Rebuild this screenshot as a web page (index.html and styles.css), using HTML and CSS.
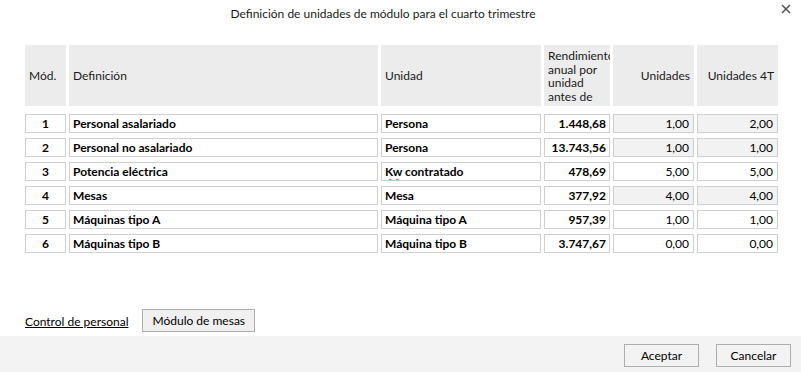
FILE: index.html
```html
<!DOCTYPE html>
<html lang="es">
<head>
<meta charset="UTF-8">
<title>Definición de unidades de módulo</title>
<link rel="stylesheet" href="styles.css">
</head>
<body>

  <!-- Cabecera del dialogo -->
  <div class="titleBar">
    <span class="title">Definición de unidades de módulo para el cuarto trimestre</span>
    <svg class="close" width="10" height="10" viewBox="0 0 10 10">
      <path d="M1 1 L9 9 M9 1 L1 9" stroke="#555" stroke-width="1.6" fill="none"/>
    </svg>
  </div>

  <!-- Tabla de modulos -->
  <div class="content">
    <div class="grid head">
      <div class="hcell">Mód.</div>
      <div class="hcell">Definición</div>
      <div class="hcell">Unidad</div>
      <div class="hcell wrap">Rendimiento anual por unidad antes de</div>
      <div class="hcell right">Unidades</div>
      <div class="hcell right">Unidades 4T</div>
    </div>

    <div class="rows">
      <div class="grid row">
        <div class="cell center">1</div>
        <div class="cell">Personal asalariado</div>
        <div class="cell">Persona</div>
        <div class="cell right">1.448,68</div>
        <div class="cell num ro">1,00</div>
        <div class="cell num ro">2,00</div>
      </div>
      <div class="grid row">
        <div class="cell center">2</div>
        <div class="cell">Personal no asalariado</div>
        <div class="cell">Persona</div>
        <div class="cell right">13.743,56</div>
        <div class="cell num ro">1,00</div>
        <div class="cell num ro">1,00</div>
      </div>
      <div class="grid row">
        <div class="cell center">3</div>
        <div class="cell">Potencia eléctrica</div>
        <div class="cell"><span class="spell">Kw</span> contratado</div>
        <div class="cell right">478,69</div>
        <div class="cell num">5,00</div>
        <div class="cell num">5,00</div>
      </div>
      <div class="grid row">
        <div class="cell center">4</div>
        <div class="cell">Mesas</div>
        <div class="cell">Mesa</div>
        <div class="cell right">377,92</div>
        <div class="cell num ro">4,00</div>
        <div class="cell num ro">4,00</div>
      </div>
      <div class="grid row">
        <div class="cell center">5</div>
        <div class="cell">Máquinas tipo A</div>
        <div class="cell">Máquina tipo A</div>
        <div class="cell right">957,39</div>
        <div class="cell num">1,00</div>
        <div class="cell num">1,00</div>
      </div>
      <div class="grid row">
        <div class="cell center">6</div>
        <div class="cell">Máquinas tipo B</div>
        <div class="cell">Máquina tipo B</div>
        <div class="cell right">3.747,67</div>
        <div class="cell num">0,00</div>
        <div class="cell num">0,00</div>
      </div>
    </div>
  </div>

  <!-- Enlaces inferiores -->
  <div class="links">
    <a href="#" class="link">Control de personal</a>
    <button class="btn">Módulo de mesas</button>
  </div>

  <!-- Pie con botones -->
  <div class="footer">
    <button class="btn big">Aceptar</button>
    <button class="btn big">Cancelar</button>
  </div>

</body>
</html>
```

FILE: styles.css
```css
body {
  margin: 0;
  background: #fff;
  color: #000;
  font-family: Lato, "Liberation Sans", sans-serif;
  font-size: 12px;
  width: 801px;
  height: 372px;
  overflow: hidden;
}

.titleBar {
  position: relative;
  height: 45px;
  text-align: center;
}

.title {
  display: inline-block;
  margin-top: 6px;
  margin-left: -35px;
  font-size: 12px;
  color: #1a1a1a;
}

.close {
  position: absolute;
  top: 4px;
  right: 10px;
}

.content {
  padding: 0 23px 0 25px;
}

.grid {
  display: grid;
  grid-template-columns: 41px 309px 160px 66px 81px 81px;
  column-gap: 3px;
}

.head {
  height: 61px;
}

.hcell {
  background: #ececec;
  color: #1a1a1a;
  padding: 0 4px;
  display: flex;
  align-items: center;
  overflow: hidden;
}

.hcell.right {
  justify-content: flex-end;
}

.hcell.wrap {
  display: block;
  padding-top: 4px;
  line-height: 13.5px;
  overflow: hidden;
}

.rows {
  margin-top: 8px;
  display: flex;
  flex-direction: column;
  gap: 5px;
}

.cell {
  height: 17px;
  border: 1px solid #cfcfcf;
  padding: 0 3px;
  line-height: 17px;
  font-weight: bold;
  white-space: nowrap;
  overflow: hidden;
}

.center { text-align: center; }
.right { text-align: right; }

.num {
  text-align: right;
  font-weight: normal;
  padding-right: 4px;
}

.ro {
  background: #f2f2f2;
}

.spell {
  text-decoration: underline wavy #e03030;
  text-decoration-thickness: 1px;
  text-underline-offset: 2px;
}

.links {
  margin-top: 56px;
  padding-left: 25px;
  display: flex;
  align-items: center;
  gap: 14px;
  height: 23px;
}

.link {
  color: #000;
  text-decoration: underline;
  margin-top: 2px;
}

.btn {
  font-family: Lato, "Liberation Sans", sans-serif;
  font-size: 12px;
  color: #000;
  background: #f0f0f0;
  border: 1px solid #adadad;
  padding: 0 9px;
  height: 23px;
  border-radius: 0;
}

.footer {
  margin-top: 4px;
  background: #f3f3f3;
  height: 36px;
  display: flex;
  justify-content: flex-end;
  align-items: center;
  gap: 17px;
  padding-right: 10px;
}

.btn.big {
  width: 75px;
  height: 23px;
  margin-top: 2px;
  background: #f3f3f3;
}
```
